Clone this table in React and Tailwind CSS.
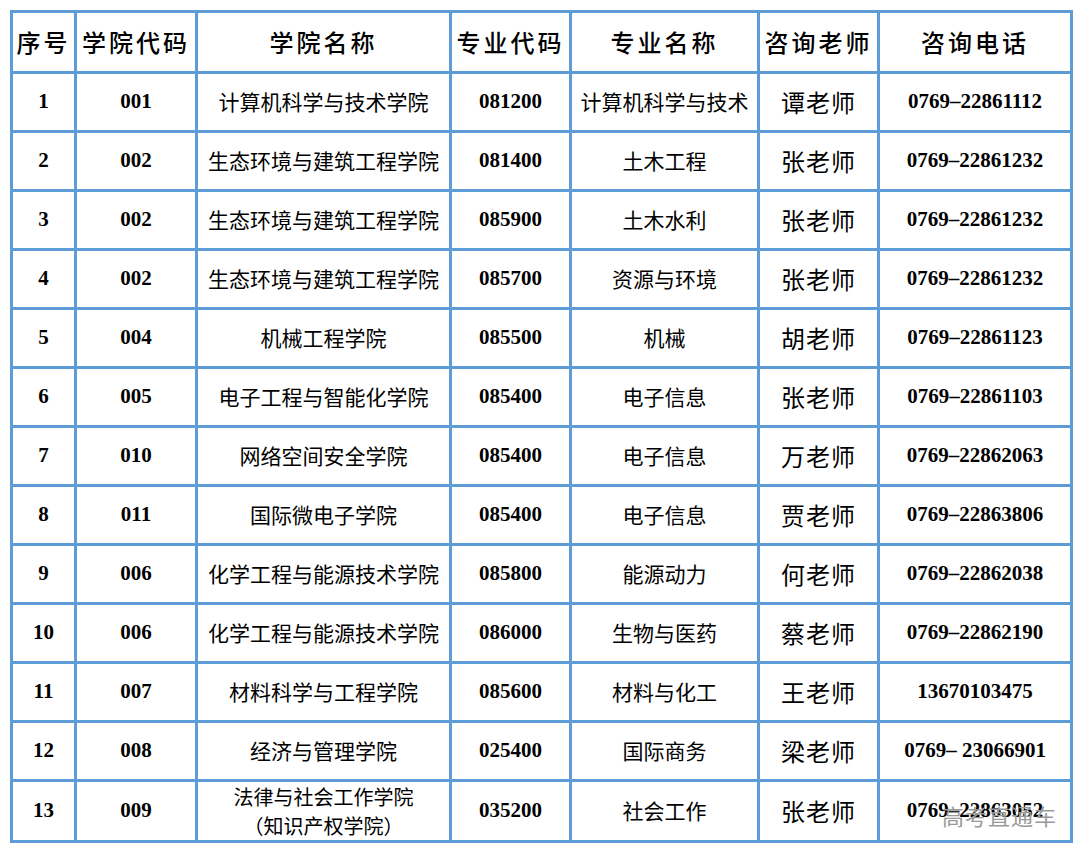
import React from 'react';

const rows = [
  ['1', '001', '计算机科学与技术学院', '081200', '计算机科学与技术', '谭老师', '0769–22861112'],
  ['2', '002', '生态环境与建筑工程学院', '081400', '土木工程', '张老师', '0769–22861232'],
  ['3', '002', '生态环境与建筑工程学院', '085900', '土木水利', '张老师', '0769–22861232'],
  ['4', '002', '生态环境与建筑工程学院', '085700', '资源与环境', '张老师', '0769–22861232'],
  ['5', '004', '机械工程学院', '085500', '机械', '胡老师', '0769–22861123'],
  ['6', '005', '电子工程与智能化学院', '085400', '电子信息', '张老师', '0769–22861103'],
  ['7', '010', '网络空间安全学院', '085400', '电子信息', '万老师', '0769–22862063'],
  ['8', '011', '国际微电子学院', '085400', '电子信息', '贾老师', '0769–22863806'],
  ['9', '006', '化学工程与能源技术学院', '085800', '能源动力', '何老师', '0769–22862038'],
  ['10', '006', '化学工程与能源技术学院', '086000', '生物与医药', '蔡老师', '0769–22862190'],
  ['11', '007', '材料科学与工程学院', '085600', '材料与化工', '王老师', '13670103475'],
  ['12', '008', '经济与管理学院', '025400', '国际商务', '梁老师', '0769– 23066901'],
];

const headers = [
  ['序号', 'w-[64px]'],
  ['学院代码', 'w-[121px]'],
  ['学院名称', 'w-[254px]'],
  ['专业代码', 'w-[120px]'],
  ['专业名称', 'w-[188px]'],
  ['咨询老师', 'w-[120px]'],
  ['咨询电话', 'w-[193px]'],
];

const cell = 'border-[3px] border-[#5e9cd8] text-center align-middle p-0 text-black';
const cjk = "font-['Noto_Sans_CJK_SC',sans-serif]";
const num = `${cell} text-[21px] font-bold font-['Liberation_Serif',serif]`;
const name = `${cell} text-[21px] ${cjk}`;
const teacher = `${cell} text-[24px] tracking-[1px] ${cjk}`;

export default function App() {
  return (
    <div className="w-[1080px] h-[852px] bg-white">
      <div className="pt-[10px] pl-[10px]">
        <table className="table-fixed border-collapse w-[1062px]">
          <thead>
            <tr className="h-[61px]">
              {headers.map(([h, w]) => (
                <th key={h} className={`${cell} ${w} text-[24px] font-medium tracking-[3px] ${cjk}`}>
                  {h}
                </th>
              ))}
            </tr>
          </thead>
          <tbody>
            {rows.map((r) => (
              <tr key={r[0]} className="h-[59px]">
                <td className={num}>{r[0]}</td>
                <td className={num}>{r[1]}</td>
                <td className={name}>{r[2]}</td>
                <td className={num}>{r[3]}</td>
                <td className={name}>{r[4]}</td>
                <td className={teacher}>{r[5]}</td>
                <td className={num}>{r[6]}</td>
              </tr>
            ))}
            <tr className="h-[61px]">
              <td className={num}>13</td>
              <td className={num}>009</td>
              <td className={`${cell} text-[20px] leading-[29px] ${cjk}`}>
                <div>法律与社会工作学院</div>
                <div>（知识产权学院）</div>
              </td>
              <td className={num}>035200</td>
              <td className={name}>社会工作</td>
              <td className={teacher}>张老师</td>
              <td className={`${num} relative`}>
                0769–22863052
                <span className={`absolute left-[62px] top-[17px] text-[22px] font-normal text-[#9a9a9a] tracking-[1px] ${cjk}`}>
                  高考直通车
                </span>
              </td>
            </tr>
          </tbody>
        </table>
      </div>
    </div>
  );
}
